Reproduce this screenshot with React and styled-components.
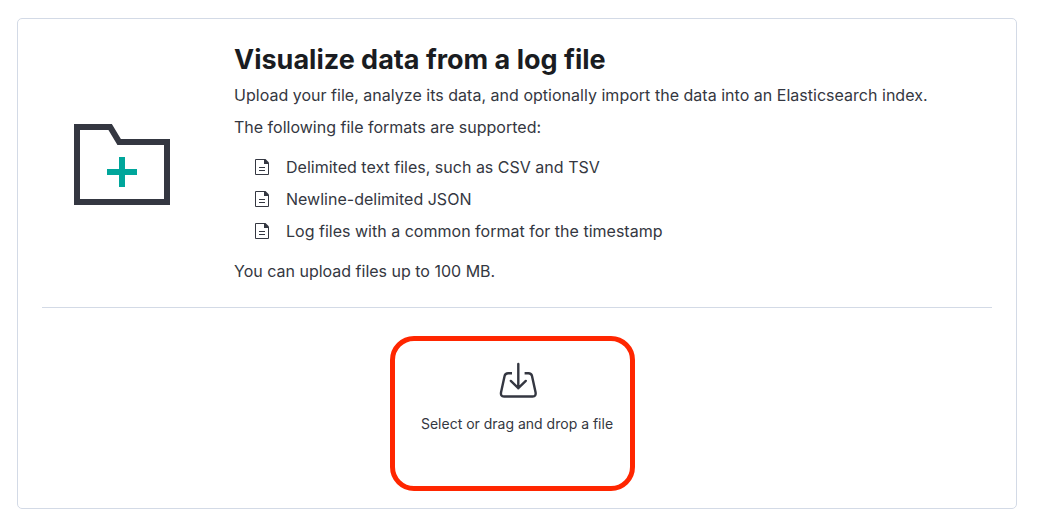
import React from 'react';
import styled, { createGlobalStyle } from 'styled-components';

const GlobalStyle = createGlobalStyle`
  *, *::before, *::after { box-sizing: border-box; }
  body {
    margin: 0;
    background: #fff;
    color: #343741;
    font-family: Inter, "Liberation Sans", sans-serif;
  }
  h1, p, ul { margin: 0; padding: 0; }
`;

const Panel = styled.main`
  display: flex;
  flex-direction: column;
  width: 1000px;
  height: 491px;
  margin: 18px 0 0 17px;
  padding: 23px 24px;
  border: 1px solid #d3dae6;
  border-radius: 5px;
`;

const Intro = styled.section`
  display: flex;
  align-items: center;
  height: 265px;
  padding-left: 32px;
  gap: 64px;
`;

const FolderIcon = styled.svg`
  flex: none;
  width: 96px;
  height: 81px;
  margin-top: -20px;
`;

const Copy = styled.div`
  display: flex;
  flex-direction: column;
  align-self: flex-start;
`;

const Title = styled.h1`
  padding-top: 1px;
  font-size: 27px;
  font-weight: 700;
  line-height: 34px;
  color: #1a1c21;
  white-space: nowrap;
`;

const Text = styled.p`
  font-size: 16px;
  line-height: 24px;
  margin-top: ${(p) => p.$gap || 8}px;
  letter-spacing: ${(p) => p.$tracking || 0}px;
  white-space: nowrap;
`;

const FormatList = styled.ul`
  display: flex;
  flex-direction: column;
  gap: 8px;
  margin-top: 16px;
  padding-left: 20px;
  list-style: none;
`;

const FormatItem = styled.li`
  display: flex;
  align-items: center;
  gap: 16px;
  font-size: 16px;
  line-height: 24px;
  letter-spacing: 0.01px;
  white-space: nowrap;
`;

const DocIcon = styled.svg`
  flex: none;
  width: 16px;
  height: 16px;
`;

const Rule = styled.hr`
  width: 100%;
  height: 1px;
  margin: 0;
  border: 0;
  background: #d3dae6;
`;

const DropZone = styled.section`
  position: relative;
  display: flex;
  flex: 1;
  flex-direction: column;
  align-items: center;
  padding-top: 52px;
`;

const ImportIcon = styled.svg`
  width: 40px;
  height: 40px;
  margin-left: 2px;
`;

const Prompt = styled.span`
  margin-top: 13px;
  font-size: 14px;
  line-height: 21px;
`;

const Highlight = styled.div`
  position: absolute;
  left: 348px;
  top: 28px;
  width: 245px;
  height: 155px;
  border: 5px solid #ff2600;
  border-radius: 24px;
  pointer-events: none;
`;

const formats = [
  'Delimited text files, such as CSV and TSV',
  'Newline-delimited JSON',
  'Log files with a common format for the timestamp',
];

const Document = () => (
  <DocIcon viewBox="0 0 16 16" fill="none">
    <path d="M10.5 .5H1.5v15h13V4.5" stroke="#343741" />
    <path d="M10 0h1.5l3.5 3.5v1.5h-5z" fill="#343741" />
    <path d="M5 8.5h6M5 11.5h6" stroke="#343741" />
  </DocIcon>
);

export default function App() {
  return (
    <>
      <GlobalStyle />
      <Panel>
        <Intro>
          <FolderIcon viewBox="0 0 32 27">
            <path
              fill="#343741"
              fillRule="evenodd"
              d="M32 27H0V0h12.62l3 5H32v22zM2 25h28V7H14.48l-3-5H2v23z"
            />
            <path fill="#00a69b" d="M15 11h2v4h4v2h-4v4h-2v-4h-4v-2h4z" />
          </FolderIcon>
          <Copy>
            <Title>Visualize data from a log file</Title>
            <Text $gap={6} $tracking={0.02}>
              Upload your file, analyze its data, and optionally import the data into an
              Elasticsearch index.
            </Text>
            <Text>The following file formats are supported:</Text>
            <FormatList>
              {formats.map((label) => (
                <FormatItem key={label}>
                  <Document />
                  {label}
                </FormatItem>
              ))}
            </FormatList>
            <Text $gap={16}>You can upload files up to 100 MB.</Text>
          </Copy>
        </Intro>
        <Rule />
        <DropZone>
          <ImportIcon
            viewBox="0 0 40 40"
            fill="none"
            stroke="#343741"
            strokeWidth="2.4"
            strokeLinejoin="round"
          >
            <path d="M14 13.2H10.2Q7.2 13.2 6.6 16L3.1 32Q2.2 36.5 6 36.5H34.6Q38.4 36.5 37.5 32L34 16Q33.4 13.2 30.4 13.2H26.6" />
            <path strokeLinecap="round" d="M20.3 4V28.2M12.8 20.9l7.5 7.3 7.5-7.3" />
          </ImportIcon>
          <Prompt>Select or drag and drop a file</Prompt>
          <Highlight />
        </DropZone>
      </Panel>
    </>
  );
}
